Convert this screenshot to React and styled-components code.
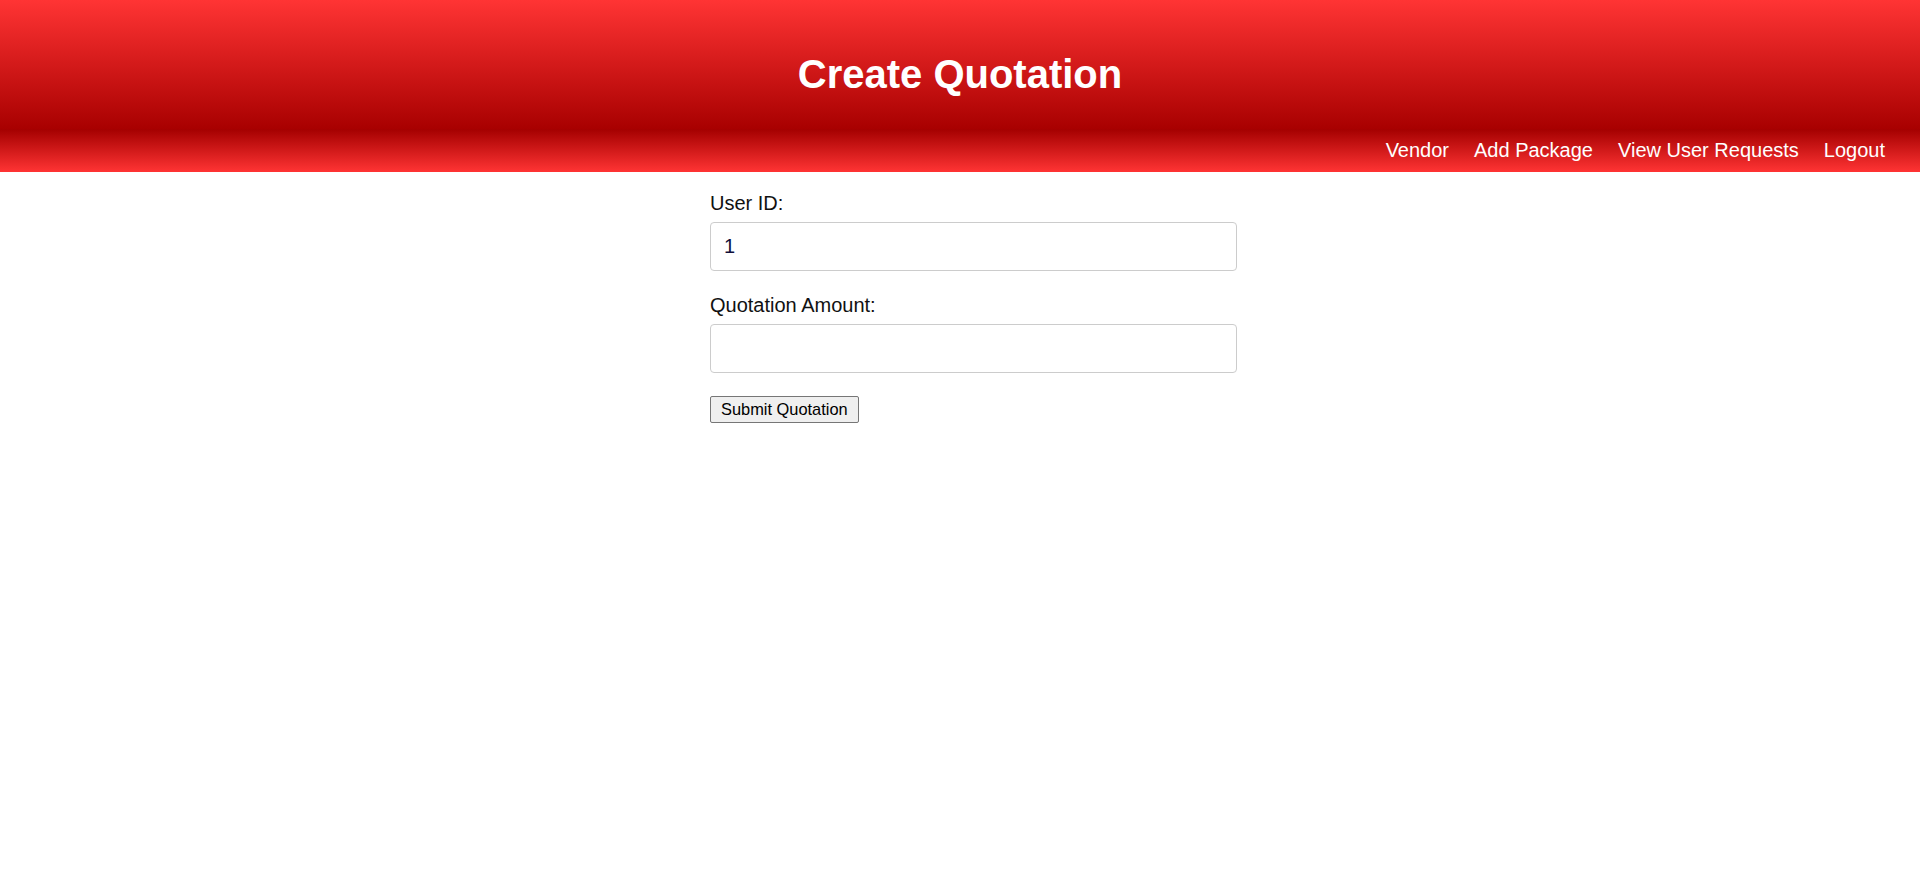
import React, { useState } from "react";
import styled, { createGlobalStyle } from "styled-components";

const GlobalStyle = createGlobalStyle`
  body {
    margin: 0;
    background: #fff;
    font-family: "Liberation Sans", Arial, sans-serif;
  }
`;

export default function App() {
  const [userId, setUserId] = useState("1");
  const [amount, setAmount] = useState("");

  return (
    <>
      <GlobalStyle />
      <Header>
        <Title>Create Quotation</Title>
      </Header>
      <Nav>
        <NavLink href="#">Vendor</NavLink>
        <NavLink href="#">Add Package</NavLink>
        <NavLink href="#">View User Requests</NavLink>
        <NavLink href="#">Logout</NavLink>
      </Nav>

      <Form onSubmit={(e) => e.preventDefault()}>
        <Label htmlFor="userId">User ID:</Label>
        <Input
          id="userId"
          type="text"
          value={userId}
          onChange={(e) => setUserId(e.target.value)}
        />

        <Label htmlFor="amount">Quotation Amount:</Label>
        <Input
          id="amount"
          type="text"
          value={amount}
          onChange={(e) => setAmount(e.target.value)}
        />

        <SubmitButton type="submit">Submit Quotation</SubmitButton>
      </Form>
    </>
  );
}

const Header = styled.header`
  background: linear-gradient(to bottom, #ff3434, #a80000);
  padding: 51px 0 32px;
  text-align: center;
`;

const Title = styled.h1`
  margin: 0;
  color: #fff;
  font-size: 40px;
  font-weight: bold;
  line-height: 46px;
`;

const Nav = styled.nav`
  display: flex;
  justify-content: flex-end;
  gap: 25px;
  padding: 10px 35px;
  height: 23px;
  background: linear-gradient(to bottom, #a40000, #ff3434);
`;

const NavLink = styled.a`
  color: #fff;
  font-size: 20px;
  line-height: 23px;
  text-decoration: none;
`;

const Form = styled.form`
  width: 500px;
  margin: 0 auto;
  padding-top: 20px;
`;

const Label = styled.label`
  display: block;
  font-size: 20px;
  line-height: 23px;
  color: #111;
  margin-bottom: 7px;
`;

const Input = styled.input`
  display: block;
  width: 100%;
  box-sizing: content-box;
  padding: 12px 12px 12px 13px;
  margin: 0 0 23px;
  border: 1px solid #ccc;
  border-radius: 4px;
  font-family: "Liberation Sans", Arial, sans-serif;
  font-size: 20px;
  line-height: 23px;
  height: 23px;
  color: #10103a;
  outline: none;
`;

const SubmitButton = styled.button`
  display: block;
  margin-top: 23px;
  height: 27px;
  padding: 0 10px;
  background: #efefef;
  border: 1px solid #767676;
  border-radius: 2px;
  font-family: "Liberation Sans", Arial, sans-serif;
  font-size: 16.4px;
  color: #000;
  cursor: pointer;
`;
